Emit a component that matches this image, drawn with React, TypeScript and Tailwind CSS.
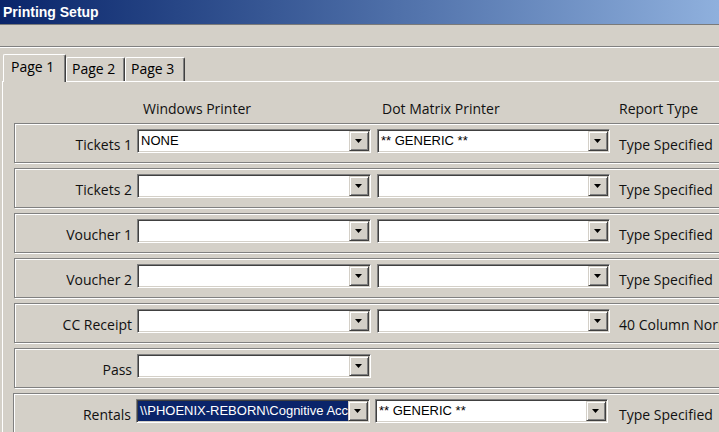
import React from "react";

function Arrow() {
  return (
    <div className="flex h-[20px] w-[20px] shrink-0 items-center justify-center border border-t-[#d4d0c8] border-l-[#d4d0c8] border-b-[#404040] border-r-[#404040] bg-[#d4d0c8] shadow-[inset_1px_1px_0_#ffffff,inset_-1px_-1px_0_#808080]">
      <svg width="8" height="5" viewBox="0 0 8 5" className="mt-px">
        <polygon points="0,0 7,0 3.5,4" fill="#000" />
      </svg>
    </div>
  );
}

function Combo({
  value,
  w,
  selected,
}: {
  value?: string;
  w: string;
  selected?: boolean;
}) {
  return (
    <div
      className={`flex h-[24px] shrink-0 border border-t-[#808080] border-l-[#808080] border-b-white border-r-white bg-white p-px shadow-[inset_1px_1px_0_#404040,inset_-1px_-1px_0_#d4d0c8] ${w}`}
    >
      <div
        className={`min-w-0 flex-1 overflow-hidden whitespace-nowrap pl-[2px] font-['Liberation_Sans',Arial,sans-serif] text-[13px] leading-[20px] ${
          selected ? "bg-[#0a246a] text-white" : "text-black"
        }`}
      >
        {value}
      </div>
      <Arrow />
    </div>
  );
}

type RowData = {
  label: string;
  win: string;
  dot?: string | null;
  type?: string;
  selected?: boolean;
};

const rows: RowData[] = [
  { label: "Tickets 1", win: "NONE", dot: "** GENERIC **", type: "Type Specified" },
  { label: "Tickets 2", win: "", dot: "", type: "Type Specified" },
  { label: "Voucher 1", win: "", dot: "", type: "Type Specified" },
  { label: "Voucher 2", win: "", dot: "", type: "Type Specified" },
  { label: "CC Receipt", win: "", dot: "", type: "40 Column Normal" },
  { label: "Pass", win: "", dot: null },
];

function Row({ r }: { r: RowData }) {
  return (
    <div className="ml-[11px] flex h-[40px] w-[740px] shrink-0 items-start border border-[#808080] shadow-[inset_1px_1px_0_#ffffff,1px_1px_0_#ffffff]">
      <div className="mt-[11px] w-[117px] shrink-0 text-right text-[14px] leading-[20px] text-[#111]">
        {r.label}
      </div>
      <div className="mt-[5px] ml-[5px]">
        <Combo value={r.win} w="w-[234px]" />
      </div>
      {r.dot !== null && r.dot !== undefined && (
        <div className="mt-[5px] ml-[6px]">
          <Combo value={r.dot} w="w-[233px]" />
        </div>
      )}
      {r.type && (
        <div className="mt-[11px] ml-[9px] whitespace-nowrap text-[14px] leading-[20px] text-[#111]">
          {r.type}
        </div>
      )}
    </div>
  );
}

export default function App() {
  return (
    <div className="h-[432px] w-[719px] overflow-hidden bg-[#d4d0c8] font-['Open_Sans',sans-serif] text-black">
      {/* title bar */}
      <div className="flex h-[24px] items-center bg-gradient-to-r from-[#0a246a] to-[#8fb0dd] pl-[3px]">
        <span className="font-['Liberation_Sans',Arial,sans-serif] text-[14px] font-bold leading-[20px] text-white">
          Printing Setup
        </span>
      </div>
      <div className="h-px bg-[#7a7a7a]" />
      <div className="h-[21px]" />
      <div className="h-px bg-[#808080]" />
      <div className="h-px bg-white" />
      <div className="h-[6px]" />

      {/* tabs */}
      <div className="flex h-[27px] items-end pl-[3px]">
        <div className="relative z-10 -mb-px h-[28px] w-[63px] rounded-t-[2px] border-t border-l border-r border-t-white border-l-white border-r-[#404040] bg-[#d4d0c8] pt-[2px] pl-[7px] text-[14px] leading-[20px] shadow-[inset_-1px_0_0_#808080]">
          Page 1
        </div>
        <div className="h-[24px] w-[59px] rounded-t-[2px] border-t border-l border-r border-t-white border-l-white border-r-[#404040] pt-[1px] pl-[5px] text-[14px] leading-[20px] shadow-[inset_-1px_0_0_#808080]">
          Page 2
        </div>
        <div className="h-[24px] w-[60px] rounded-t-[2px] border-t border-l border-r border-t-white border-l-white border-r-[#404040] pt-[1px] pl-[5px] text-[14px] leading-[20px] shadow-[inset_-1px_0_0_#808080]">
          Page 3
        </div>
      </div>

      {/* panel */}
      <div className="ml-[2px] h-[400px] border-t border-l border-white">
        <div className="flex h-[20px] pt-0 mt-[17px] text-[14px] leading-[20px] text-[#111]">
          <div className="ml-[140px] w-[239px] shrink-0">Windows Printer</div>
          <div className="w-[237px] shrink-0">Dot Matrix Printer</div>
          <div className="shrink-0 whitespace-nowrap">Report Type</div>
        </div>
        <div className="mt-[4px] flex flex-col gap-[5px]">
          {rows.map((r) => (
            <Row key={r.label} r={r} />
          ))}
          <div className="ml-[10px] flex h-[40px] w-[740px] shrink-0 items-start border border-[#808080] shadow-[inset_1px_1px_0_#ffffff,1px_1px_0_#ffffff]">
            <div className="mt-[11px] w-[117px] shrink-0 text-right text-[14px] leading-[20px] text-[#111]">
              Rentals
            </div>
            <div className="mt-[5px] ml-[5px]">
              <Combo
                value={"\\\\PHOENIX-REBORN\\Cognitive Accounting Printer"}
                w="w-[234px]"
                selected
              />
            </div>
            <div className="mt-[5px] ml-[5px]">
              <Combo value="** GENERIC **" w="w-[233px]" />
            </div>
            <div className="mt-[11px] ml-[11px] whitespace-nowrap text-[14px] leading-[20px] text-[#111]">
              Type Specified
            </div>
          </div>
        </div>
      </div>
    </div>
  );
}
